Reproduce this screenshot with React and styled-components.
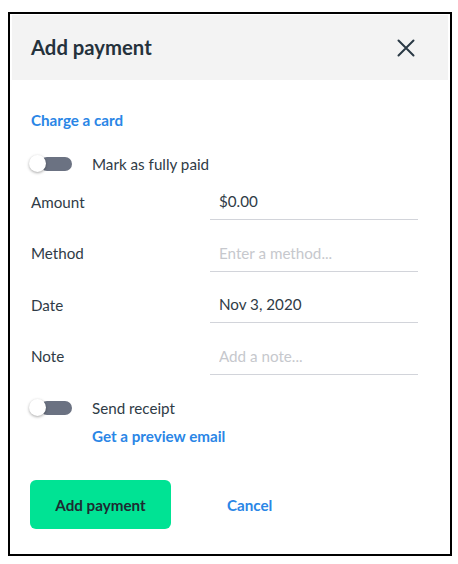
import styled, { createGlobalStyle } from 'styled-components';

const GlobalStyle = createGlobalStyle`
  body {
    margin: 0;
    padding: 12px 6px 8px 8px;
    font-family: Lato, "Open Sans", sans-serif;
    color: #2f3b46;
    background: #fff;
  }
`;

const Frame = styled.div`
  width: 444px;
  height: 544px;
  box-sizing: border-box;
  border: 2px solid #000;
  padding: 1px 2px 2px 2px;
  display: flex;
  flex-direction: column;
`;

const Header = styled.div`
  height: 65px;
  background: #f3f3f3;
  display: flex;
  align-items: center;
  justify-content: space-between;
  padding: 0 33px 0 19px;
`;

const Title = styled.h2`
  margin: 0;
  font-size: 20.3px;
  font-weight: 700;
  color: #25323c;
  padding-bottom: 1px;
`;

const CloseButton = styled.button`
  background: none;
  border: none;
  padding: 0;
  width: 18px;
  height: 18px;
  cursor: pointer;
  display: flex;
`;

const Body = styled.div`
  padding: 30px 19px 0 19px;
  display: flex;
  flex-direction: column;
`;

const TextLink = styled.a`
  font-size: 15.2px;
  font-weight: 700;
  color: #2a86e6;
  line-height: 20px;
  text-decoration: none;
  cursor: pointer;
  margin-left: ${p => p.indent || 0}px;
  margin-top: ${p => p.top || 0}px;
`;

const ToggleRow = styled.div`
  display: flex;
  align-items: center;
  height: 24px;
  margin-top: ${p => p.top}px;
  font-size: 15.2px;
`;

const Toggle = styled.div`
  position: relative;
  width: 42px;
  height: 14px;
  margin-right: 19px;
`;

const Track = styled.div`
  position: absolute;
  left: 9px;
  top: 0;
  width: 32px;
  height: 14px;
  border-radius: 7px;
  background: #6b7282;
`;

const Knob = styled.div`
  position: absolute;
  left: -2px;
  top: -2px;
  width: 17px;
  height: 17px;
  border-radius: 50%;
  background: #fff;
  box-shadow: 0 1px 3px rgba(0, 0, 0, 0.35);
`;

const Fields = styled.div`
  display: flex;
  flex-direction: column;
  gap: 15.5px;
  margin-top: 8px;
`;

const Field = styled.label`
  display: flex;
  align-items: center;
  height: 36px;
`;

const Label = styled.span`
  width: 179px;
  font-size: 15.2px;
  padding-bottom: 1px;
`;

const Input = styled.input`
  width: 208px;
  height: 36px;
  box-sizing: border-box;
  border: none;
  border-bottom: 1.5px solid #d2d4da;
  padding: 0 0 1px 9px;
  font-family: inherit;
  font-size: 15.2px;
  color: #2f3b46;
  outline: none;
  background: transparent;

  &::placeholder {
    color: #c6c8cd;
  }
`;

const Actions = styled.div`
  display: flex;
  align-items: center;
  gap: 56px;
  margin-top: 34px;
  margin-left: -1px;
`;

const PrimaryButton = styled.button`
  width: 141px;
  height: 49px;
  border: none;
  border-radius: 6px;
  background: #00e394;
  font-family: inherit;
  font-size: 15.2px;
  font-weight: 700;
  color: #1e2a31;
  cursor: pointer;
`;

const fields = [
  { label: 'Amount', value: '$0.00' },
  { label: 'Method', placeholder: 'Enter a method...' },
  { label: 'Date', value: 'Nov 3, 2020' },
  { label: 'Note', placeholder: 'Add a note...' }
];

const Switch = () => (
  <Toggle>
    <Track />
    <Knob />
  </Toggle>
);

const App = () => (
  <>
    <GlobalStyle />
    <Frame>
      <Header>
        <Title>Add payment</Title>
        <CloseButton aria-label="Close">
          <svg width="18" height="18" viewBox="0 0 18 18">
            <path d="M1.5 1.5 L16.5 16.5 M16.5 1.5 L1.5 16.5" stroke="#2a3945" strokeWidth="2" strokeLinecap="round" />
          </svg>
        </CloseButton>
      </Header>
      <Body>
        <TextLink>Charge a card</TextLink>
        <ToggleRow top={22}>
          <Switch />
          Mark as fully paid
        </ToggleRow>
        <Fields>
          {fields.map(f => (
            <Field key={f.label}>
              <Label>{f.label}</Label>
              <Input defaultValue={f.value} placeholder={f.placeholder} />
            </Field>
          ))}
        </Fields>
        <ToggleRow top={21.5}>
          <Switch />
          Send receipt
        </ToggleRow>
        <TextLink indent={61} top={6}>Get a preview email</TextLink>
        <Actions>
          <PrimaryButton>Add payment</PrimaryButton>
          <TextLink>Cancel</TextLink>
        </Actions>
      </Body>
    </Frame>
  </>
);

export default App;
